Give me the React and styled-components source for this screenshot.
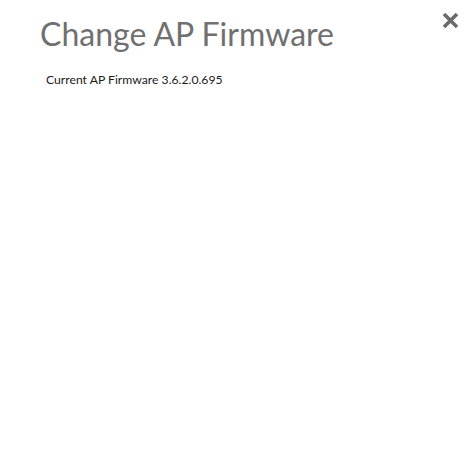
import React from "react"
import styled, { createGlobalStyle } from "styled-components"

const GlobalStyle = createGlobalStyle`
  html, body {
    margin: 0;
    padding: 0;
    background: #fff;
  }
`

const Dialog = styled.div`
  position: relative;
  width: 471px;
  height: 454px;
  box-sizing: border-box;
  padding: 14px 40px 0 40px;
  background: #fff;
  font-family: "Lato", "Open Sans", sans-serif;
`

const Title = styled.h1`
  margin: 0;
  font-size: 32px;
  font-weight: 400;
  line-height: 40px;
  color: #707070;
`

const Info = styled.p`
  margin: 18px 0 0 6px;
  font-size: 12.2px;
  line-height: 16px;
  color: #1a1a1a;
`

const CloseButton = styled.button`
  position: absolute;
  top: 9px;
  right: 10px;
  width: 22px;
  height: 22px;
  padding: 0;
  border: 0;
  background: none;
  display: flex;
  align-items: center;
  justify-content: center;
  cursor: pointer;
`

const CloseIcon = () => (
  <svg width="17" height="17" viewBox="0 0 17 17">
    <path d="M2 2 L15 15 M15 2 L2 15" stroke="#6b6b6b" strokeWidth="3.6" strokeLinecap="butt" />
  </svg>
)

export default function App() {
  return (
    <>
      <GlobalStyle />
      <Dialog>
        <Title>Change AP Firmware</Title>
        <Info>Current AP Firmware 3.6.2.0.695</Info>
        <CloseButton aria-label="Close">
          <CloseIcon />
        </CloseButton>
      </Dialog>
    </>
  )
}
